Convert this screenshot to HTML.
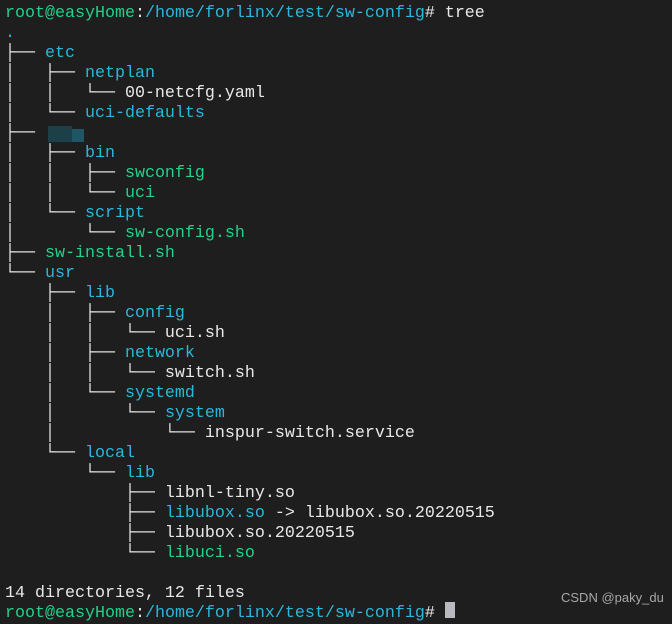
<!DOCTYPE html>
<html><head><meta charset="utf-8"><style>
html,body{margin:0;padding:0;background:#1e1e1e;width:672px;height:616px;overflow:hidden;}
pre{margin:0;position:absolute;left:5px;top:4px;font-family:"Liberation Mono","DejaVu Sans Mono",monospace;font-size:16.67px;line-height:20px;color:#e8e8e8;}
.g{color:#23d18b}.b{color:#29b8db}
.blur{position:absolute;left:48px;top:126px;width:24px;height:16px;background:#1d3f48}
.blur2{position:absolute;left:72px;top:129px;width:12px;height:13px;background:#1f5565}
.cur{position:absolute;left:445px;top:602px;width:10px;height:16px;background:#b9b9c0}
.wm{position:absolute;left:561px;top:590px;font-family:"Liberation Sans",sans-serif;font-size:13px;color:#a8a8a8}
</style></head><body>
<pre><span class="g">root@easyHome</span>:<span class="b">/home/forlinx/test/sw-config</span># tree
<span class="b">.</span>
├── <span class="b">etc</span>
│   ├── <span class="b">netplan</span>
│   │   └── 00-netcfg.yaml
│   └── <span class="b">uci-defaults</span>
├── 
│   ├── <span class="b">bin</span>
│   │   ├── <span class="g">swconfig</span>
│   │   └── <span class="g">uci</span>
│   └── <span class="b">script</span>
│       └── <span class="g">sw-config.sh</span>
├── <span class="g">sw-install.sh</span>
└── <span class="b">usr</span>
    ├── <span class="b">lib</span>
    │   ├── <span class="b">config</span>
    │   │   └── uci.sh
    │   ├── <span class="b">network</span>
    │   │   └── switch.sh
    │   └── <span class="b">systemd</span>
    │       └── <span class="b">system</span>
    │           └── inspur-switch.service
    └── <span class="b">local</span>
        └── <span class="b">lib</span>
            ├── libnl-tiny.so
            ├── <span class="b">libubox.so</span> -&gt; libubox.so.20220515
            ├── libubox.so.20220515
            └── <span class="g">libuci.so</span>

14 directories, 12 files
<span class="g">root@easyHome</span>:<span class="b">/home/forlinx/test/sw-config</span># </pre>
<div class="blur"></div><div class="blur2"></div>
<div class="cur"></div>
<div class="wm">CSDN @paky_du</div>
</body></html>
